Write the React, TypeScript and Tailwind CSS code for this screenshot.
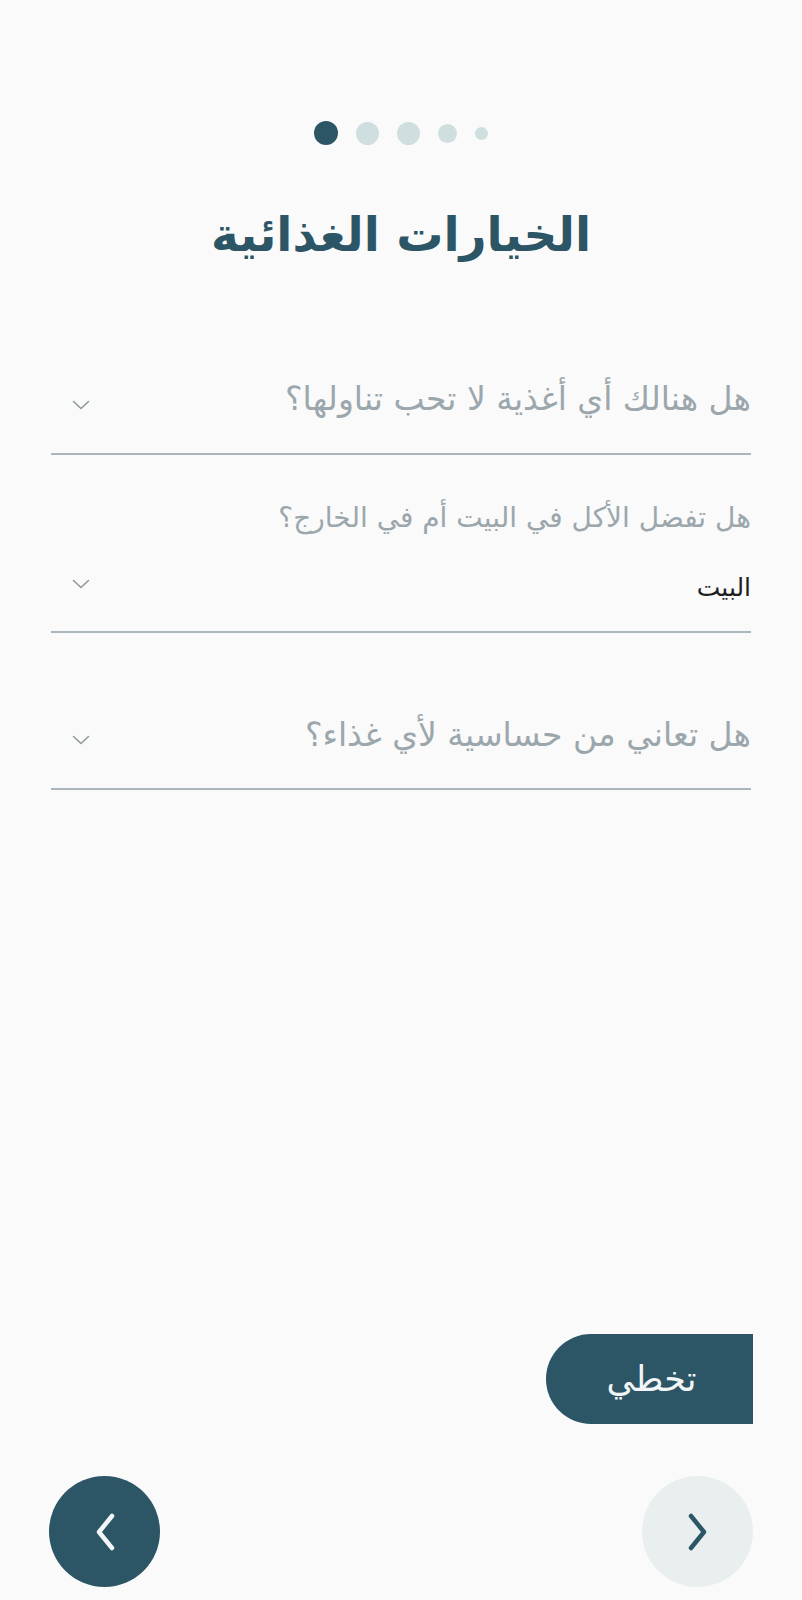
import React from "react";

const Chevron = () => (
  <svg width="18" height="10" viewBox="0 0 18 10" fill="none">
    <path d="M1.5 1.5 L9 8.5 L16.5 1.5" stroke="#8e999e" strokeWidth="1.6" strokeLinecap="round" strokeLinejoin="round" />
  </svg>
);

export default function App() {
  const font = { fontFamily: '"DejaVu Sans", "Noto Sans", sans-serif' };
  return (
    <div className="w-full min-h-[1600px] bg-[#fafafa] flex flex-col" style={font}>
      {/* dots */}
      <div className="pt-[121px] flex justify-center items-center gap-[18px] h-[145px]">
        <div className="w-[24px] h-[24px] rounded-full bg-[#2c5566]" />
        <div className="w-[23px] h-[23px] rounded-full bg-[#cfdfdf]" />
        <div className="w-[23px] h-[23px] rounded-full bg-[#cfdfdf]" />
        <div className="w-[19px] h-[19px] rounded-full bg-[#cfdfdf]" />
        <div className="w-[13px] h-[13px] rounded-full bg-[#cfdfdf]" />
      </div>

      {/* title */}
      <div dir="rtl" className="mt-[60px] h-[60px] leading-[60px] text-center text-[47px] font-bold text-[#2c5566]">
        الخيارات الغذائية
      </div>

      <div className="px-[51px] flex flex-col">
        {/* field 1 */}
        <div className="mt-[104px] pb-[24px] border-b-2 border-[#aab6bb]">
          <div dir="rtl" className="h-[60px] flex items-center justify-between">
            <span className="text-[33px] text-[#9ba7ac]">هل هنالك أي أغذية لا تحب تناولها؟</span>
            <span className="ml-[21px] mt-[12px]"><Chevron /></span>
          </div>
        </div>

        {/* field 2 */}
        <div className="pb-[18px] border-b-2 border-[#aab6bb]">
          <div dir="rtl" className="mt-[43px] h-[40px] flex items-center">
            <span className="text-[28px] text-[#9ba7ac]">هل تفضل الأكل في البيت أم في الخارج؟</span>
          </div>
          <div dir="rtl" className="mt-[25px] h-[50px] flex items-center justify-between">
            <span className="text-[25px] text-[#1d1d1d]">البيت</span>
            <span className="ml-[21px] mb-[8px]"><Chevron /></span>
          </div>
        </div>

        {/* field 3 */}
        <div className="pb-[23px] border-b-2 border-[#aab6bb]">
          <div dir="rtl" className="mt-[72px] h-[60px] flex items-center justify-between">
            <span className="text-[33px] text-[#9ba7ac]">هل تعاني من حساسية لأي غذاء؟</span>
            <span className="ml-[21px] mt-[10px]"><Chevron /></span>
          </div>
        </div>
      </div>

      {/* skip */}
      <div className="mt-[544px] flex justify-end pr-[49px]">
        <button dir="rtl" className="w-[207px] h-[90px] rounded-l-[45px] bg-[#2c5566] text-[#f1f5f5] text-[35px] flex items-center justify-center pl-[4px]">
          تخطي
        </button>
      </div>

      {/* nav */}
      <div className="mt-[52px] flex justify-between px-[49px]">
        <div className="w-[111px] h-[111px] rounded-full bg-[#2c5566] flex items-center justify-center">
          <svg width="24" height="40" viewBox="0 0 24 40" fill="none">
            <path d="M19 4 L6 20 L19 36" stroke="#f3f6f6" strokeWidth="4.5" strokeLinecap="round" strokeLinejoin="round" />
          </svg>
        </div>
        <div className="w-[111px] h-[111px] rounded-full bg-[#e9efef] flex items-center justify-center">
          <svg width="24" height="40" viewBox="0 0 24 40" fill="none">
            <path d="M5 4 L18 20 L5 36" stroke="#2c5566" strokeWidth="4.5" strokeLinecap="round" strokeLinejoin="round" />
          </svg>
        </div>
      </div>
    </div>
  );
}
